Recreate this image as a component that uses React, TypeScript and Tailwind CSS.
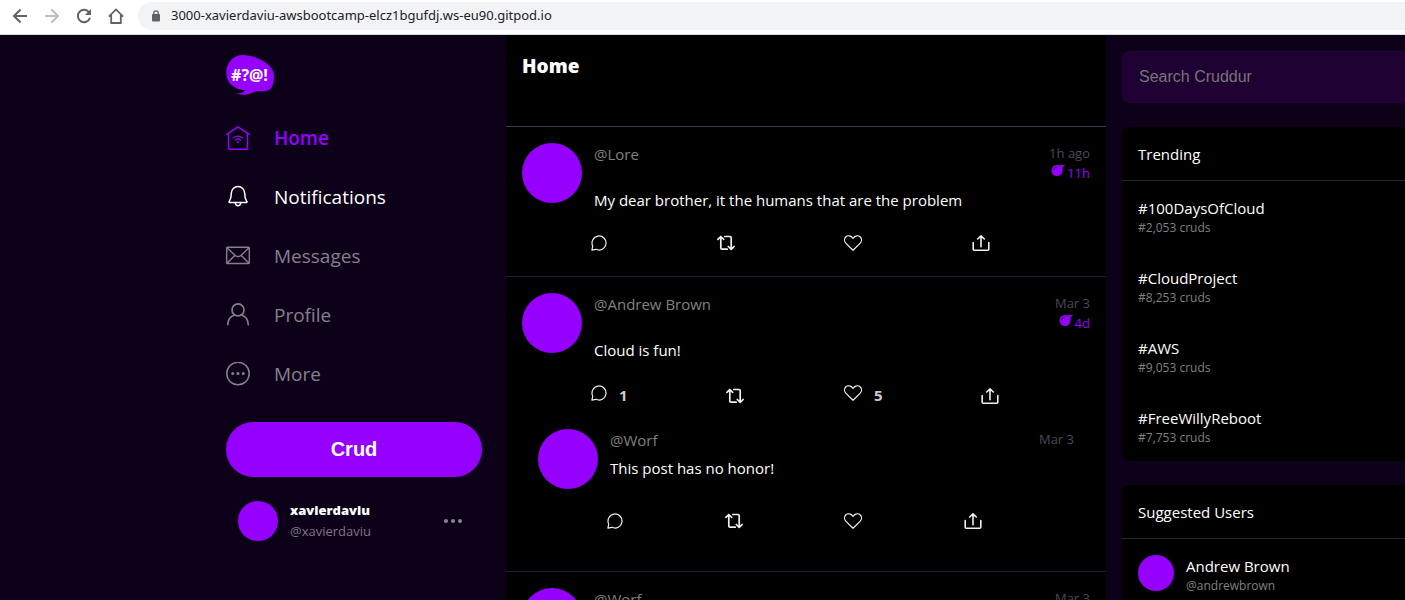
import type { ReactNode } from 'react';

type IconProps = { className?: string };

function Svg({ box = 24, className, children }: { box?: number; className?: string; children: ReactNode }) {
  return (
    <svg viewBox={`0 0 ${box} ${box}`} className={className} fill="none" stroke="currentColor" strokeLinecap="round" strokeLinejoin="round" aria-hidden="true">
      {children}
    </svg>
  );
}

const BackIcon = () => (
  <Svg box={16} className="size-4"><path strokeWidth="2" strokeLinecap="butt" strokeLinejoin="miter" d="M15 8H2.5M8.5 1.5 2 8l6.5 6.5" /></Svg>
);
const ForwardIcon = () => (
  <Svg box={16} className="size-4"><path strokeWidth="2" strokeLinecap="butt" strokeLinejoin="miter" d="M1 8h12.5M7.5 1.5 14 8l-6.500 6.500" /></Svg>
);
const ReloadIcon = () => (
  <Svg box={16} className="size-4">
    <path strokeWidth="2" strokeLinecap="butt" d="M13.300 4.600A6.200 6.200 0 1 0 14 9.800" />
    <path fill="currentColor" stroke="none" d="M15 1v6H9z" />
  </Svg>
);
const HouseIcon = () => (
  <Svg box={16} className="size-4"><path strokeWidth="1.800" strokeLinecap="butt" strokeLinejoin="miter" d="M.8 8.600 8 1.400l7.200 7.200M3.200 7v8h9.600V7" /></Svg>
);
const LockIcon = () => (
  <svg viewBox="0 0 10 12" className="h-3 w-2.5" aria-hidden="true">
    <rect x="1" y="4" width="8" height="7.500" rx="1" fill="currentColor" />
    <path d="M2.800 4.500V3a2.200 2.200 0 0 1 4.400 0v1.500" fill="none" stroke="currentColor" strokeWidth="1.300" />
  </svg>
);

const HomeIcon = () => (
  <Svg className="size-6">
    <path strokeWidth="1.400" d="M.8 8.300 12 .9l11.200 7.400M2.500 7.500V22a1.200 1.200 0 0 0 1.200 1.200h16.600a1.200 1.200 0 0 0 1.200-1.200V7.500" />
    <path strokeWidth="1.300" d="M7.700 11.800c2.400-2.200 6.200-2.200 8.600 0M9.700 14c1.300-1.200 3.300-1.200 4.600 0" />
    <circle cx="12" cy="16.300" r="1" fill="currentColor" stroke="none" />
  </Svg>
);
const BellIcon = () => (
  <Svg className="size-6">
    <path strokeWidth="1.500" d="M5.300 8.300a6.700 6.700 0 0 1 13.400 0c0 4.600 1 6.700 2.100 8.200.4.600.2 1-.5 1H3.700c-.7 0-.9-.4-.5-1 1.100-1.500 2.100-3.600 2.100-8.200Z" />
    <path strokeWidth="1.500" d="M9.300 18c.2 1.700 1.200 2.700 2.700 2.700s2.500-1 2.700-2.700" />
  </Svg>
);
const MailIcon = () => (
  <Svg className="size-6">
    <rect x=".7" y="3.200" width="22.600" height="16.300" rx="1" strokeWidth="1.400" />
    <path strokeWidth="1.400" d="m1 3.800 8.200 7.800c1.700 1.500 3.900 1.500 5.600 0L23 3.800M1.200 19l7.300-7.200M22.800 19l-7.300-7.200" />
  </Svg>
);
const ProfileIcon = () => (
  <Svg className="size-6">
    <circle cx="12" cy="6.900" r="6" strokeWidth="1.600" />
    <path strokeWidth="1.600" d="M1.700 21.700c.2-4.800 3-8.700 7-9.800M22.300 21.700c-.2-4.800-3-8.700-7-9.800" />
  </Svg>
);
const MoreIcon = () => (
  <Svg className="size-6">
    <circle cx="12" cy="11.500" r="11.200" strokeWidth="1.500" />
    <g fill="currentColor" stroke="none"><circle cx="6.700" cy="11.500" r="1.500" /><circle cx="12" cy="11.500" r="1.500" /><circle cx="17.300" cy="11.500" r="1.500" /></g>
  </Svg>
);

const ReplyIcon = () => (
  <Svg box={16} className="size-4"><path strokeWidth="1.200" d="M.9 15.100 1.700 11A7 7 0 1 1 5 14.300Z" /></Svg>
);
const RepostIcon = ({ className = '' }: IconProps) => (
  <svg viewBox="0 0 18 16" className={`h-4 w-[18px] ${className}`} fill="none" stroke="currentColor" strokeWidth="1.700" strokeLinecap="round" strokeLinejoin="round" aria-hidden="true">
    <path d="M3.800 1.700V13a1.200 1.200 0 0 0 1.200 1.200h5.200M.9 4.300l2.900-2.800 2.900 2.800M7.800 1.500H13a1.200 1.200 0 0 1 1.200 1.200v11.300M11.300 11.500l2.900 2.800 2.900-2.800" />
  </svg>
);
const HeartIcon = () => (
  <svg viewBox="0 0 18 16" className="h-4 w-[18px]" fill="none" stroke="currentColor" strokeWidth="1.200" strokeLinejoin="round" aria-hidden="true">
    <path d="M9 15.300 2 8.400C.1 6.500.1 3.700 1.700 2c1.900-1.900 5.200-1.700 7.300 1.300C11.100.3 14.400.1 16.300 2c1.600 1.700 1.600 4.500-.3 6.400Z" />
  </svg>
);
const ShareIcon = () => (
  <svg viewBox="0 0 18 16" className="h-4 w-[18px]" fill="none" stroke="currentColor" strokeWidth="1.600" strokeLinecap="round" strokeLinejoin="round" aria-hidden="true">
    <path d="M1.200 7.600v6.600a1 1 0 0 0 1 1h13.600a1 1 0 0 0 1-1V7.600M9 11.800V1.200M5.700 4 9 .9 12.300 4" />
  </svg>
);
const BombIcon = () => (
  <svg viewBox="0 0 14 12" className="mb-1.5 h-3 w-3.5" aria-hidden="true">
    <circle cx="6" cy="6.500" r="5.500" fill="currentColor" />
    <path d="m8 2.200 2-1.800 1.300.8L14 .4l-1.100 2-1.500.4.200 1.600-1.200 1.400Z" fill="currentColor" />
    <path d="M2.600 5.800c.3-1.400 1.200-2.300 2.600-2.700" fill="none" stroke="#000" strokeWidth=".8" strokeLinecap="round" />
  </svg>
);

const Logo = () => (
  <svg viewBox="0 0 48 40" className="h-10 w-12" role="img" aria-label="Cruddur">
    <path fill="#9500ff" d="M17 0C29 0 48 9 48 20c0 7-1 12-5 15-4 2-9 1-14 1.500C25 39.500 17 41 10.500 38.500c4 0 7-1 9-3.200C8 34.500.3 28 .3 18 .3 8 7 0 17 0Z" />
    <text x="23.500" y="25.500" textAnchor="middle" fill="#fff" fontFamily="'Open Sans', 'Noto Sans', sans-serif" fontSize="16" fontWeight="700">#?@!</text>
  </svg>
);

const navItems = [
  { label: 'Home', icon: <HomeIcon />, tone: 'font-semibold text-[#9500ff]' },
  { label: 'Notifications', icon: <BellIcon />, tone: 'text-white' },
  { label: 'Messages', icon: <MailIcon />, tone: 'text-[#86808c]' },
  { label: 'Profile', icon: <ProfileIcon />, tone: 'text-[#86808c]' },
  { label: 'More', icon: <MoreIcon />, tone: 'text-[#86808c]' },
];

function Sidebar() {
  return (
    <aside className="flex min-w-0 flex-1 justify-end pr-6">
      <div className="w-64 pt-5">
        <Logo />
        <nav className="mt-[13px]">
          {navItems.map((item) => (
            <a key={item.label} href="#" className={`flex h-[59px] items-center gap-6 text-[19px] ${item.tone}`}>
              {item.icon}
              <span className="pt-0.5">{item.label}</span>
            </a>
          ))}
        </nav>
        <button className="mt-[19px] h-[55px] w-full rounded-full bg-[#9500ff] pb-0.5 text-center font-['Liberation_Sans',Arial,sans-serif] text-xl font-bold text-white">Crud</button>
        <div className="flex items-center px-3 pt-[23px]">
          <span className="size-10 shrink-0 rounded-full bg-[#9500ff]" />
          <div className="ml-3 flex-1 text-[13px] leading-[21px]">
            <div className="font-extrabold text-white">xavierdaviu</div>
            <div className="text-[#7d7783]">@xavierdaviu</div>
          </div>
          <button aria-label="Account options" className="mr-[7px] text-[#8a8491]">
            <svg viewBox="0 0 20 6" className="h-1.5 w-5" fill="currentColor" aria-hidden="true">
              <circle cx="3" cy="3" r="2" /><circle cx="10" cy="3" r="2" /><circle cx="17" cy="3" r="2" />
            </svg>
          </button>
        </div>
      </div>
    </aside>
  );
}

type PostData = { name: string; time: string; expires?: string; text: string; replies?: number; likes?: number; thread?: PostData[] };

const posts: PostData[] = [
  { name: 'Lore', time: '1h ago', expires: '11h', text: 'My dear brother, it the humans that are the problem' },
  {
    name: 'Andrew Brown', time: 'Mar 3', expires: '4d', text: 'Cloud is fun!', replies: 1, likes: 5,
    thread: [{ name: 'Worf', time: 'Mar 3', text: 'This post has no honor!' }],
  },
  { name: 'Worf', time: 'Mar 3', text: '' },
];

function Action({ label, count, children }: { label: string; count?: number; children: ReactNode }) {
  return (
    <button aria-label={label} className="flex grow basis-auto items-start pl-[9px] text-[#f0f0f0]">
      {children}
      {count !== undefined && <span className="h-[22px] w-[18px] pl-3 text-[15px] font-bold leading-5 text-[#ccc]">{count}</span>}
    </button>
  );
}

function Post({ post, nested = false }: { post: PostData; nested?: boolean }) {
  return (
    <article className={nested ? 'px-4 pb-[17px] pt-4' : 'border-b border-[#1f2135] px-4 pb-[19px] pt-4'}>
      <div className="flex gap-3">
        <span className="size-[60px] shrink-0 rounded-full bg-[#9500ff]" />
        <div className="min-w-0 flex-1">
          <div className="flex items-start justify-between">
            <a href="#" className="text-[15px] leading-[22px] text-[#808080]">@{post.name}</a>
            <div className="text-right text-[13px] leading-5">
              <div className="text-[#484c58]">{post.time}</div>
              {post.expires && (
                <div className="flex items-center justify-end gap-0.5 text-[#9500ff]">
                  <BombIcon />
                  <span>{post.expires}</span>
                </div>
              )}
            </div>
          </div>
          <p className="mt-1.5 text-[15px] leading-[22px] text-white">{post.text}</p>
        </div>
      </div>
      <div className="ml-[60px] mt-6 flex items-center pb-1.5">
        <Action label="Reply" count={post.replies}><ReplyIcon /></Action>
        <Action label="Repost"><RepostIcon /></Action>
        <Action label="Like" count={post.likes}><HeartIcon /></Action>
        <Action label="Share"><ShareIcon /></Action>
      </div>
      {post.thread?.map((reply) => <Post key={reply.name} post={reply} nested />)}
    </article>
  );
}

const trends = [
  ['#100DaysOfCloud', '2,053'],
  ['#CloudProject', '8,253'],
  ['#AWS', '9,053'],
  ['#FreeWillyReboot', '7,753'],
];

function RightColumn() {
  return (
    <aside className="w-[299px] shrink-0 pl-4 pt-4">
      <input aria-label="Search Cruddur" placeholder="Search Cruddur" className="block h-[52px] w-full rounded-l-lg border border-r-0 border-[#29003f] bg-[#1f0033] px-4 font-['Liberation_Sans',Arial,sans-serif] text-base text-white outline-none placeholder:text-[#757575]" />
      <section className="mt-6 rounded-l-lg bg-black text-[15px] text-white">
        <h2 className="border-b border-[#1f2937] px-4 pb-[15px] pt-4 leading-[22px]">Trending</h2>
        {trends.map(([tag, count]) => (
          <a key={tag} href="#" className="block h-[70px] px-4 pt-4">
            <div className="leading-[22px]">{tag}</div>
            <div className="text-xs leading-[18px] text-[#808080]">#{count} cruds</div>
          </a>
        ))}
      </section>
      <section className="mt-6 rounded-l-lg bg-black pb-4 text-[15px] text-white">
        <h2 className="border-b border-[#1f2937] px-4 pb-[15px] pt-4 leading-[22px]">Suggested Users</h2>
        <a href="#" className="flex items-start gap-3 px-4 pt-4">
          <span className="size-9 rounded-full bg-[#9500ff]" />
          <div>
            <div className="leading-[22px]">Andrew Brown</div>
            <div className="text-xs leading-[18px] text-[#808080]">@andrewbrown</div>
          </div>
        </a>
      </section>
    </aside>
  );
}

export default function App() {
  return (
    <div className="flex h-screen flex-col overflow-hidden bg-[#0d0019] font-['Open_Sans','Noto_Sans',sans-serif]">
      <header className="flex h-[35px] shrink-0 items-center border-b border-[#dadce0] bg-white pb-0.5 text-[#5f6368]">
        <div className="flex gap-4 px-3">
          <button aria-label="Back"><BackIcon /></button>
          <button aria-label="Forward" className="text-[#bbbdbf]"><ForwardIcon /></button>
          <button aria-label="Reload"><ReloadIcon /></button>
          <button aria-label="Home page"><HouseIcon /></button>
        </div>
        <div className="ml-0.5 flex h-7 flex-1 items-center gap-2.5 rounded-l-full bg-[#f1f3f4] pl-[13px]">
          <LockIcon />
          <input aria-label="Address" readOnly value="3000-xavierdaviu-awsbootcamp-elcz1bgufdj.ws-eu90.gitpod.io" className="min-w-0 flex-1 bg-transparent font-['Noto_Sans',sans-serif] text-[13px] text-[#202124] outline-none" />
        </div>
      </header>
      <div className="flex min-h-0 flex-1">
        <Sidebar />
        <main className="w-[600px] shrink-0 overflow-hidden bg-black">
          <div className="border-b border-[#3a3d52] px-4 pb-[45px] pt-4">
            <h1 className="text-[19px] font-extrabold leading-[30px] text-white">Home</h1>
          </div>
          {posts.map((post) => <Post key={post.name} post={post} />)}
        </main>
        <RightColumn />
      </div>
    </div>
  );
}
